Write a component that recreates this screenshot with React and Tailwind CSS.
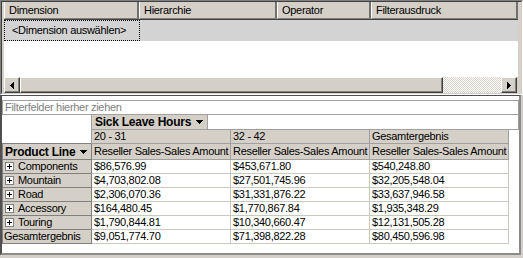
const filterCols = [
  { label: 'Dimension', w: 'w-[135px]' },
  { label: 'Hierarchie', w: 'w-[138px]' },
  { label: 'Operator', w: 'w-[94px]' },
  { label: 'Filterausdruck', w: 'flex-1' },
];

const rows = [
  ['Components', '$86,576.99', '$453,671.80', '$540,248.80'],
  ['Mountain', '$4,703,802.08', '$27,501,745.96', '$32,205,548.04'],
  ['Road', '$2,306,070.36', '$31,331,876.22', '$33,637,946.58'],
  ['Accessory', '$164,480.45', '$1,770,867.84', '$1,935,348.29'],
  ['Touring', '$1,790,844.81', '$10,340,660.47', '$12,131,505.28'],
];
const total = ['Gesamtergebnis', '$9,051,774.70', '$71,398,822.28', '$80,450,596.98'];

function DownArrow() {
  return (
    <svg width="7" height="4" viewBox="0 0 7 4" shapeRendering="crispEdges">
      <polygon points="0,0 7,0 3.5,4" fill="#000" />
    </svg>
  );
}

function Expand() {
  return (
    <svg width="9" height="9" viewBox="0 0 9 9" shapeRendering="crispEdges" className="shrink-0">
      <rect x="0.5" y="0.5" width="8" height="8" fill="#fff" stroke="#808080" />
      <rect x="2" y="4" width="5" height="1" fill="#000" />
      <rect x="4" y="2" width="1" height="5" fill="#000" />
    </svg>
  );
}

function ScrollButton({ dir }) {
  return (
    <div className="w-[16px] h-full flex items-center justify-center bg-[#d4d0c8] border border-t-white border-l-white border-r-[#404040] border-b-[#404040] shadow-[inset_-1px_-1px_0_#808080]">
      <svg width="4" height="7" viewBox="0 0 4 7" shapeRendering="crispEdges">
        {dir === 'left' ? <polygon points="4,0 0,3.5 4,7" fill="#000" /> : <polygon points="0,0 4,3.5 0,7" fill="#000" />}
      </svg>
    </div>
  );
}

export default function App() {
  return (
    <div className="w-[523px] h-[258px] bg-[#d4d0c8] overflow-hidden font-['Liberation_Sans',Arial,sans-serif] text-[11px] tracking-[-0.3px] text-black leading-none">
      {/* filter grid */}
      <div className="h-[95px] border-l border-t border-r border-b border-l-[#808080] border-t-[#808080] border-r-white border-b-white">
        <div className="h-full border-l border-t border-r border-b border-l-[#404040] border-t-[#404040] border-r-[#d4d0c8] border-b-[#d4d0c8] pl-[2px] pr-[3px] flex flex-col bg-[#d4d0c8]">
          <div className="h-[18px] flex border-b border-[#404040]">
            {filterCols.map((c) => (
              <div key={c.label} className={`${c.w} h-full flex items-center pl-[4px] bg-[#d4d0c8] border-l border-l-white border-r-2 border-r-[#707070] border-b border-b-[#808080]`}>
                {c.label}
              </div>
            ))}
          </div>
          <div className="h-[21px] flex bg-[#d3d3d3]">
            <div className="w-[136px] h-full flex items-center pl-[7px] border border-dotted border-black">
              &lt;Dimension auswählen&gt;
            </div>
          </div>
          <div className="flex-1 bg-white" />
          <div className="h-[16px] flex mr-[1px]">
            <ScrollButton dir="left" />
            <div className="w-[423px] h-full bg-[#d4d0c8] border border-t-white border-l-white border-r-[#404040] border-b-[#404040] shadow-[inset_-1px_-1px_0_#808080]" />
            <div className="flex-1 h-full bg-[repeating-conic-gradient(#ffffff_0%_25%,#d4d0c8_0%_50%)] bg-[length:2px_2px]" />
            <ScrollButton dir="right" />
          </div>
        </div>
      </div>

      {/* pivot table */}
      <div className="h-[163px] pr-[2px] pb-[3px]">
        <div className="h-full border-l-2 border-t border-r-2 border-b-2 border-l-[#505050] border-t-[#505050] border-r-[#8a8a8a] border-b-[#8a8a8a] bg-white flex flex-col">
          <div className="mt-[4px] h-[15px] border border-[#a0a0a0] flex items-center pl-[2px] text-[#808080]">
            Filterfelder hierher ziehen
          </div>

          <div className="h-[15px] flex">
            <div className="w-[89px]" />
            <div className="w-[117px] h-full bg-[#d4d0c8] border-l border-r border-b border-[#a0a0a0] flex items-center pl-[3px] pr-[4px] justify-between font-bold text-[12px] tracking-[-0.25px]">
              <span>Sick Leave Hours</span>
              <DownArrow />
            </div>
            <div className="flex-1 h-full border-r border-b border-[#a0a0a0]" />
          </div>

          <div className="h-[14px] flex">
            <div className="w-[89px] h-full border-b border-[#808080]" />
            {['20 - 31', '32 - 42', 'Gesamtergebnis'].map((t, i) => (
              <div key={t} className={`${i === 0 ? 'w-[140px] border-l' : 'w-[139px]'} h-full bg-[#d4d0c8] border-r border-b border-[#a0a0a0] flex items-center pl-[2px]`}>
                {t}
              </div>
            ))}
          </div>

          <div className="h-[16px] flex">
            <div className="w-[90px] h-full bg-[#d4d0c8] border-l border-r border-b border-[#808080] flex items-center justify-between pl-[2px] pr-[4px] font-bold text-[12px] tracking-[-0.25px]">
              <span>Product Line</span>
              <DownArrow />
            </div>
            {[0, 1, 2].map((i) => (
              <div key={i} className="w-[139px] h-full bg-[#d4d0c8] border-r border-b border-[#a0a0a0] flex items-center pl-[2px]">
                Reseller Sales-Sales Amount
              </div>
            ))}
          </div>

          {rows.map((r) => (
            <div key={r[0]} className="h-[14px] flex">
              <div className="w-[90px] h-full bg-[#d4d0c8] border-l border-r border-b border-[#808080] flex items-center gap-[4px] pl-[2px]">
                <Expand />
                <span>{r[0]}</span>
              </div>
              {r.slice(1).map((v, i) => (
                <div key={i} className="w-[139px] h-full border-r border-b border-[#cbc8c0] flex items-center pl-[2px]">
                  {v}
                </div>
              ))}
            </div>
          ))}

          <div className="h-[14px] flex">
            <div className="w-[90px] h-full bg-[#d4d0c8] border-l border-r border-b border-[#808080] flex items-center pl-[1px]">
              {total[0]}
            </div>
            {total.slice(1).map((v, i) => (
              <div key={i} className="w-[139px] h-full border-r border-b border-[#cbc8c0] flex items-center pl-[2px]">
                {v}
              </div>
            ))}
          </div>
        </div>
      </div>
    </div>
  );
}
